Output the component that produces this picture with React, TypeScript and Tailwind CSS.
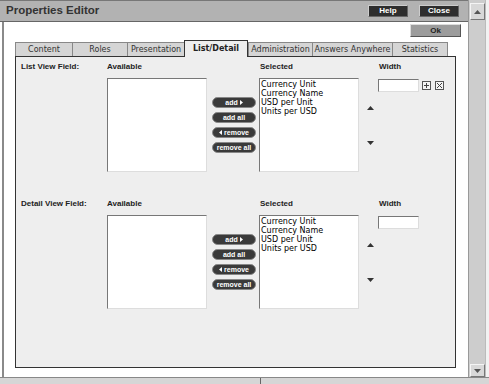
import React from "react";

const tabs = [
  { label: "Content", w: "w-[57px]" },
  { label: "Roles", w: "w-[55px]" },
  { label: "Presentation", w: "w-[57px]" },
  { label: "List/Detail", w: "w-[64px]", active: true },
  { label: "Administration", w: "w-[64px]" },
  { label: "Answers Anywhere", w: "w-[80px]" },
  { label: "Statistics", w: "w-[56px]" },
];

const selectedItems = ["Currency Unit", "Currency Name", "USD per Unit", "Units per USD"];

const Tri = ({ dir }: { dir: "left" | "right" | "up" | "down" }) => {
  if (dir === "right")
    return (
      <svg width="3" height="5" viewBox="0 0 3 5" className="inline-block">
        <path d="M0 0 L3 2.5 L0 5 Z" fill="white" />
      </svg>
    );
  if (dir === "left")
    return (
      <svg width="3" height="5" viewBox="0 0 3 5" className="inline-block">
        <path d="M3 0 L0 2.5 L3 5 Z" fill="white" />
      </svg>
    );
  if (dir === "up")
    return (
      <svg width="7" height="4" viewBox="0 0 7 4">
        <path d="M0 4 L3.5 0 L7 4 Z" fill="#333" />
      </svg>
    );
  return (
    <svg width="7" height="4" viewBox="0 0 7 4">
      <path d="M0 0 L3.5 4 L7 0 Z" fill="#333" />
    </svg>
  );
};

const PillButton = ({ children }: { children: React.ReactNode }) => (
  <div className="h-[11px] w-[44px] rounded-full bg-[#3a3a3a] border border-[#888] flex items-center justify-center gap-[2px] text-white font-bold text-[7px] leading-none font-['Liberation_Sans',sans-serif]">
    {children}
  </div>
);

const ListBox = ({ items }: { items: string[] }) => (
  <div className="w-[100px] h-[94px] bg-white border border-t-[#777] border-l-[#777] border-b-[#ddd] border-r-[#ddd] pl-[1px] pt-[1px]">
    {items.map((it) => (
      <div key={it} className="text-[8px] leading-[9px] text-black font-['DejaVu_Sans',sans-serif] whitespace-nowrap">
        {it}
      </div>
    ))}
  </div>
);

const Section = ({ label, icons }: { label: string; icons?: boolean }) => (
  <div className="flex flex-col">
    <div className="flex h-[12px] items-center mb-[5px] text-[8px] font-bold text-[#222] font-['Liberation_Sans',sans-serif]">
      <div className="w-[86px]">{label}</div>
      <div className="w-[153px]">Available</div>
      <div className="w-[119px]">Selected</div>
      <div>Width</div>
    </div>
    <div className="flex">
      <div className="w-[86px]" />
      <ListBox items={[]} />
      <div className="ml-[5px] mr-[3px] pt-[19px] flex flex-col gap-[4px]">
        <PillButton>
          add <Tri dir="right" />
        </PillButton>
        <PillButton>add all</PillButton>
        <PillButton>
          <Tri dir="left" /> remove
        </PillButton>
        <PillButton>remove all</PillButton>
      </div>
      <ListBox items={selectedItems} />
      <div className="w-[19px] flex flex-col items-center pl-[4px] pt-[28px]">
        <Tri dir="up" />
        <div className="h-[31px]" />
        <Tri dir="down" />
      </div>
      <div className="flex items-start gap-[3px] pt-[1px]">
        <div className="w-[41px] h-[13px] bg-white border border-t-[#777] border-l-[#777] border-b-[#ddd] border-r-[#ddd]" />
        {icons && (
          <div className="flex gap-[4px] pt-[2px]">
            <svg width="9" height="9" viewBox="0 0 9 9">
              <rect x="0.5" y="0.5" width="8" height="8" fill="#f4f4f4" stroke="#555" />
              <path d="M4.5 2 V7 M2 4.5 H7" stroke="#444" />
            </svg>
            <svg width="9" height="9" viewBox="0 0 9 9">
              <rect x="0.5" y="0.5" width="8" height="8" fill="#f4f4f4" stroke="#555" />
              <path d="M2 2 L7 7 M7 2 L2 7" stroke="#444" />
            </svg>
          </div>
        )}
      </div>
    </div>
  </div>
);

const TitleButton = ({ children }: { children: React.ReactNode }) => (
  <div className="w-[40px] h-[12px] bg-[#2e2e2e] border border-t-[#ccc] border-l-[#ccc] border-b-[#666] border-r-[#666] flex items-center justify-center text-white text-[8px] font-bold font-['Liberation_Sans',sans-serif] leading-none">
    {children}
  </div>
);

export default function App() {
  return (
    <div className="w-[489px] h-[384px] flex flex-col bg-white overflow-hidden">
      <div className="flex h-[377px]">
        {/* main window */}
        <div className="w-[468px] flex flex-col">
          <div className="h-[22px] bg-[#b2b2b2] border-t border-t-[#777] border-b border-b-[#666] flex items-center justify-between">
            <span className="pl-[6px] text-[11.5px] font-bold text-[#333] font-['Liberation_Sans',sans-serif]">
              Properties Editor
            </span>
            <div className="flex gap-[11px] pr-[9px]">
              <TitleButton>Help</TitleButton>
              <TitleButton>Close</TitleButton>
            </div>
          </div>
          <div className="flex flex-1">
            <div className="w-[4px] flex">
              <div className="w-[2px]" />
              <div className="w-[2px] bg-[#8a8a8a]" />
            </div>
            <div className="flex-1 flex flex-col">
              <div className="flex justify-end pr-[7px] pt-[2px]">
                <div className="w-[51px] h-[13px] bg-[#9c9c9c] border border-t-[#ddd] border-l-[#ddd] border-b-[#555] border-r-[#555] flex items-center justify-center text-[8px] font-bold text-[#222] font-['Liberation_Sans',sans-serif] leading-none">
                  Ok
                </div>
              </div>
              {/* tabs */}
              <div className="flex items-end pl-[11px] mt-[3px] h-[16px] relative z-10">
                {tabs.map((t) =>
                  t.active ? (
                    <div
                      key={t.label}
                      className={`${t.w} h-[17px] -mb-px bg-[#eeeeee] border border-[#333] border-b-0 flex items-center justify-center text-[8px] font-bold text-[#222] font-['DejaVu_Sans',sans-serif] whitespace-nowrap`}
                    >
                      {t.label}
                    </div>
                  ) : (
                    <div
                      key={t.label}
                      className={`${t.w} h-[14px] bg-[#d5d5d5] border-t border-l border-[#888] last:border-r flex items-center justify-center text-[8px] text-[#333] font-['DejaVu_Sans',sans-serif] whitespace-nowrap`}
                    >
                      {t.label}
                    </div>
                  )
                )}
              </div>
              {/* panel */}
              <div className="ml-[11px] w-[441px] h-[312px] border border-[#333] bg-[#eeeeee] pl-[5px] pt-[4px] flex flex-col">
                <Section label="List View Field:" icons />
                <div className="h-[26px]" />
                <Section label="Detail View Field:" />
              </div>
            </div>
          </div>
        </div>
        {/* scrollbar */}
        <div className="w-[17px] bg-[#cdcdcd] border-l border-[#999] flex flex-col items-center justify-between pt-[3px]">
          <div className="w-[15px] h-[17px] bg-[#d8d8d8] border border-t-[#f4f4f4] border-l-[#f4f4f4] border-b-[#777] border-r-[#777] flex items-center justify-center">
            <svg width="7" height="4" viewBox="0 0 7 4">
              <path d="M0 4 L3.5 0 L7 4 Z" fill="#555" />
            </svg>
          </div>
          <div className="w-[15px] h-[13px] bg-[#d8d8d8] border border-t-[#f4f4f4] border-l-[#f4f4f4] border-b-[#777] border-r-[#777] flex items-center justify-center">
            <svg width="7" height="4" viewBox="0 0 7 4">
              <path d="M0 0 L3.5 4 L7 0 Z" fill="#555" />
            </svg>
          </div>
        </div>
        <div className="w-[4px] bg-[#f2f2f2] border-l border-[#bbb]" />
      </div>
      {/* bottom strip */}
      <div className="h-[7px] flex border-t border-[#888] bg-[#d6d6d6]">
        <div className="w-[261px] border-r border-[#666]" />
      </div>
    </div>
  );
}
